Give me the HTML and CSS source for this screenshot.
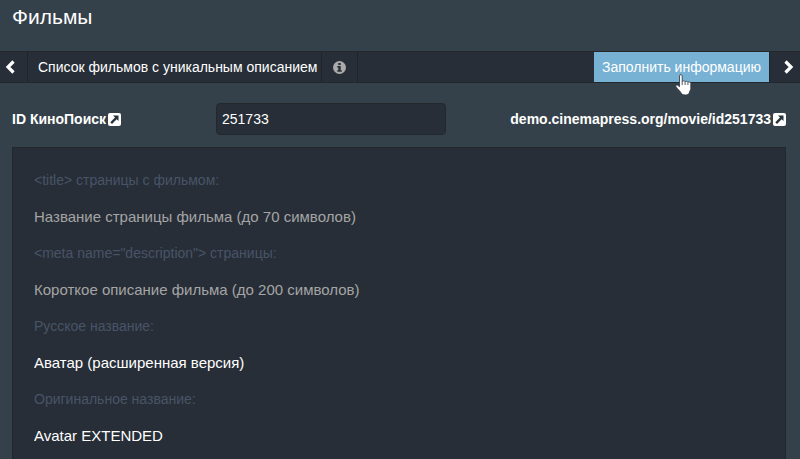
FILE: index.html
```
<!DOCTYPE html>
<html lang="ru">

<head>
    <meta charset="UTF-8">
    <meta name="viewport" content="width=device-width, initial-scale=1.0">
    <title>Фильмы</title>
    <link rel="stylesheet" href="styles.css">
</head>

<body>
    <h1>Фильмы</h1>

    <!-- Toolbar -->
    <nav class="toolbar">
        <button class="tool arrow" type="button" aria-label="Назад">
            <svg width="10" height="14" viewBox="0 0 10 14"><path d="M8.500 1.500 3 7l5.500 5.500" fill="none" stroke="#fff" stroke-width="3.200"/></svg>
        </button>
        <a class="tool title" href="#">Список фильмов с уникальным описанием</a>
        <button class="tool info" type="button" aria-label="Информация">
            <svg width="13" height="13" viewBox="0 0 13 13"><circle cx="6.500" cy="6.500" r="6.500" fill="#aaa"/><path d="M5.300 2h2.400v2H5.300zM4.300 5h3.400v4.300h1v1.500H4.300V9.300h1V6.500h-1z" fill="#272e37"/></svg>
        </button>
        <div class="fill">
            <button class="tool fill-button" type="button">Заполнить информацию</button>
            <svg class="cursor" width="17" height="22" viewBox="0 0 17 22"><path d="M4.500 1.800C4.500.3 7.200.3 7.200 1.800V7.500c.5-1 2.700-.9 2.900.3.500-.9 2.600-.7 2.800.5.700-.7 2.900-.4 2.900 1.200v5c0 1.800-1.500 2.800-1.500 4.500-.5 2.700-7.500 2.700-8.300-.2C5 17 3 15.500 1 12.700c-.9-1.400.7-2.400 1.900-1.400l1.600 1.400z" fill="#fff" stroke="#2b323b" stroke-width=".8"/><path d="M7.200 7.500V11M10.100 8v3M12.900 8.500V11" stroke="#2b323b" stroke-width=".8"/></svg>
        </div>
        <button class="tool arrow" type="button" aria-label="Вперёд">
            <svg width="10" height="14" viewBox="0 0 10 14"><path d="M1.500 1.500 7 7l-5.500 5.500" fill="none" stroke="#fff" stroke-width="3.200"/></svg>
        </button>
    </nav>

    <form>
        <div class="movie-id">
            <label for="kp-id">ID КиноПоиск
                <svg width="13" height="13" viewBox="0 0 13 13"><rect width="13" height="13" rx="2" fill="#fff"/><path d="M5 2.500h5.500V8L8.700 6.200 4 10.900 2.300 9.200 7 4.500z" fill="#27323a"/></svg>
            </label>
            <input id="kp-id" type="text" value="251733">
            <a href="#">demo.cinemapress.org/movie/id251733
                <svg width="13" height="13" viewBox="0 0 13 13"><rect width="13" height="13" rx="2" fill="#fff"/><path d="M5 2.500h5.500V8L8.700 6.200 4 10.900 2.300 9.200 7 4.500z" fill="#27323a"/></svg>
            </a>
        </div>

        <!-- Movie fields -->
        <div class="fields">
            <label for="title">&lt;title&gt; страницы с фильмом:</label>
            <input id="title" type="text" placeholder="Название страницы фильма (до 70 символов)">
            <label for="description">&lt;meta name="description"&gt; страницы:</label>
            <input id="description" type="text" placeholder="Короткое описание фильма (до 200 символов)">
            <label for="title-ru">Русское название:</label>
            <input id="title-ru" type="text" value="Аватар (расширенная версия)">
            <label for="title-en">Оригинальное название:</label>
            <input id="title-en" type="text" value="Avatar EXTENDED">
        </div>
    </form>
</body>

</html>
```
FILE: styles.css
```
* {
    box-sizing: border-box;
}

body {
    display: flex;
    flex-direction: column;
    min-height: 100vh;
    margin: 0;
    background-color: #35414a;
    color: #fff;
    font-family: "Liberation Sans", Arial, sans-serif;
    font-size: 14px;
}

h1 {
    margin: 0;
    padding: 5px 12px 22px;
    font-size: 21px;
    font-weight: normal;
    line-height: 24px;
}

button,
input {
    font: inherit;
    color: inherit;
}

a {
    color: inherit;
    text-decoration: none;
}

svg {
    display: block;
    flex-shrink: 0;
}

.toolbar {
    display: flex;
    height: 32px;
    background-color: #272e37;
    border-top: 1px solid #22272c;
    border-bottom: 1px solid #22272c;
}

.tool {
    display: flex;
    align-items: center;
    background: none;
    border: none;
    border-right: 1px solid #20242a;
    padding: 0 8px;
    cursor: pointer;
}

.arrow {
    width: 28px;
    padding: 0 5px;
}

.title {
    padding: 0 4px 0 10px;
}

.info {
    width: 36px;
    padding: 0 11px;
}

.fill {
    position: relative;
    display: flex;
    margin-left: auto;
}

.fill-button {
    background-color: #77b1d4;
}

.fill + .arrow {
    width: 30px;
    padding: 0 6px 0 14px;
    border-right: none;
}

/* hand pointer over the button */
.cursor {
    position: absolute;
    left: 81px;
    top: 22px;
}

form {
    display: flex;
    flex-direction: column;
    flex: 1;
    padding: 20px 14px 0 12px;
}

.movie-id {
    display: flex;
    align-items: center;
    margin-bottom: 12px;
    font-weight: bold;
}

.movie-id label,
.movie-id a {
    display: flex;
    align-items: center;
    gap: 2px;
}

.movie-id label {
    width: 204px;
}

.movie-id input {
    width: 230px;
    height: 32px;
    padding: 0 5px;
    background-color: #272e37;
    border: 1px solid #23282d;
    border-radius: 4px;
    font-weight: normal;
}

.movie-id a {
    margin-left: auto;
}

.fields {
    display: flex;
    flex-direction: column;
    flex: 1;
    padding: 14px 21px 0;
    background-color: #272e37;
    border: 1px solid #22272c;
    border-bottom: none;
}

.fields label {
    color: #475467;
    line-height: 36px;
}

.fields input {
    height: 37px;
    padding: 0;
    background: none;
    border: none;
    font-size: 15px;
}

.fields input::placeholder {
    color: #a5a5a5;
}
```
